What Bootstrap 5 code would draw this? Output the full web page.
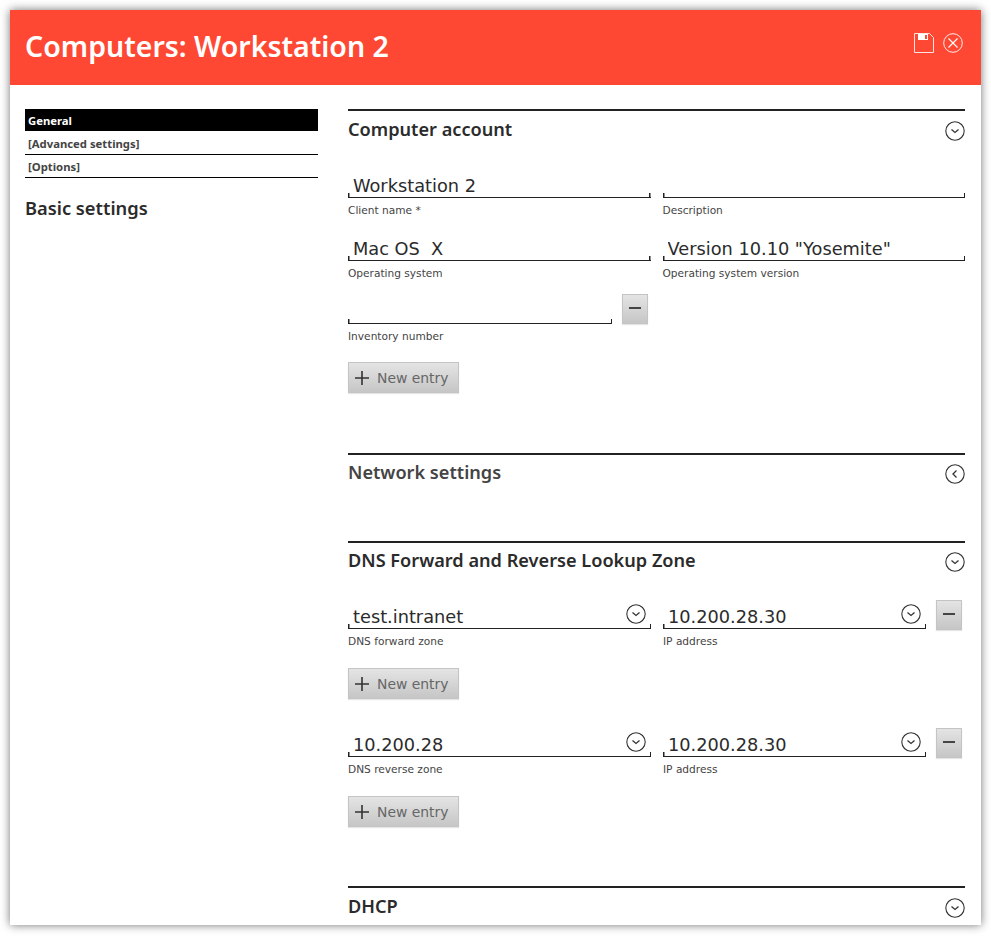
<!DOCTYPE html>
<html lang="en">
<head>
    <meta charset="UTF-8">
    <meta name="viewport" content="width=device-width, initial-scale=1.0">
    <title>Computers: Workstation 2</title>
    <link rel="stylesheet" href="https://cdn.jsdelivr.net/npm/bootstrap@5.3.0/dist/css/bootstrap.min.css">
    <style>
        html, body { height: 100%; overflow: hidden; }
        body { background: #fff; padding: 10px; font-family: "DejaVu Sans", sans-serif; color: #2b2b2b; }
        .dialog-box { width: 971px; height: 915px; overflow: hidden; background: #fff; box-shadow: 0 0 9px rgba(0,0,0,.55); }
        .dialog-head { height: 75px; flex: none; background: #ff4833; color: #fff; padding: 0 18px 0 15px; }
        .dialog-head h1 { font: 600 28.5px/1 "Noto Sans", sans-serif; margin: 0 0 3px; }
        .head-icons { margin-top: -10px; gap: 9px; }
        .side-col { width: 293px; margin-left: 15px; margin-right: 30px; padding-top: 24px; flex: none; }
        .main-col { width: 617px; padding-top: 24px; flex: none; }
        .tab-item { display: block; height: 23px; padding: 0 3px; font: 700 11.3px/23px "Noto Sans", sans-serif; color: #444; text-decoration: none; border-bottom: 1px solid #000; }
        .tab-item.on { height: 22px; line-height: 24px; margin-bottom: 1px; background: #000; color: #fff; border: 0; }
        .side-title { font: 600 18.3px/1 "Noto Sans", sans-serif; margin: 21px 0 0; color: #2b2b2b; }
        .sect { border-top: 2px solid #222; }
        .sect-head { height: 37px; }
        .sect-head.low { padding-top: 2px; }
        .sect-head h2 { font: 600 18.15px/1 "Noto Sans", sans-serif; margin: 0 0 3px; color: #2b2b2b; }
        .sect-head.dim h2 { color: #444; }
        .sect-body { padding-top: 25px; }
        .sect-body.tight { padding-top: 24px; }
        .fld-row { height: 63px; gap: 12px; }
        .fld-row.next-block { margin-top: 33px; }
        .fld-wrap { flex: 1 1 0; min-width: 0; }
        .fld-box { position: relative; }
        .fld-input.form-control { height: 25px; padding: 1px 5px 0; border: 0; border-radius: 0; box-shadow: none; font: 400 17.75px/24px "DejaVu Sans", sans-serif; color: #2b2b2b;
            background: linear-gradient(#222,#222) left bottom/100% 1.5px no-repeat, linear-gradient(#222,#222) left bottom/1.5px 5px no-repeat, linear-gradient(#222,#222) right bottom/1.5px 5px no-repeat, #fff; }
        .fld-note { display: block; font-size: 10.6px; line-height: 14px; margin-top: 5px; color: #444; }
        .fld-drop { position: absolute; right: 5px; top: 0; }
        .btn-grey.btn { display: flex; align-items: center; justify-content: center; padding: 0; border-radius: 0; border: 1px solid #c4c4c4; background: linear-gradient(#e4e4e4,#c6c6c6); box-shadow: 0 1px 1px rgba(0,0,0,.1); color: #555; }
        .btn-minus.btn { width: 26px; height: 30px; flex: none; margin-left: -2px; }
        .btn-new.btn { width: 111px; height: 31px; gap: 8px; justify-content: flex-start; padding: 0 0 0 6px; font: 400 13.9px/1 "DejaVu Sans", sans-serif; color: #666; }
        .btn-new.btn span { padding-top: 2px; }
        .btn-line.low { margin-top: 1px; }
    </style>
</head>
<body>
    <svg width="0" height="0" class="d-block">
        <symbol id="ic-down" viewBox="0 0 20 20"><circle cx="10" cy="10" r="9.2" fill="none" stroke="#333" stroke-width="1.1"/><path d="M6.500 8.500l3.500 3 3.500-3" fill="none" stroke="#333" stroke-width="1.3"/></symbol>
        <symbol id="ic-left" viewBox="0 0 20 20"><circle cx="10" cy="10" r="9.2" fill="none" stroke="#333" stroke-width="1.1"/><path d="M11.500 6.500l-3.500 3.500 3.500 3.500" fill="none" stroke="#333" stroke-width="1.3"/></symbol>
        <symbol id="ic-minus" viewBox="0 0 14 14"><path d="M1 6h12" stroke="#444" stroke-width="2"/></symbol>
        <symbol id="ic-plus" viewBox="0 0 14 14"><path d="M0 7h14M7 0v14" stroke="#333" stroke-width="1.6"/></symbol>
    </svg>

    <div class="dialog-box d-flex flex-column">
        <!-- Header -->
        <div class="dialog-head d-flex align-items-center justify-content-between">
            <h1>Computers: Workstation 2</h1>
            <div class="head-icons d-flex align-items-center">
                <svg width="20" height="20" viewBox="0 0 20 20"><path d="M.5.5h15l4 4v15H.5z" fill="none" stroke="#fff" stroke-opacity=".85"/><path d="M4 1h10v6H4z" fill="#fff"/><path d="M11 2h2v4h-2z" fill="#ff4833"/></svg>
                <svg width="20" height="20" viewBox="0 0 20 20"><circle cx="10" cy="10" r="9.300" fill="none" stroke="#fff" stroke-opacity=".9"/><path d="M5.500 5.500l9 9M14.500 5.500l-9 9" stroke="#fff" stroke-width="1.100"/></svg>
            </div>
        </div>

        <div class="d-flex">
            <!-- Sidebar -->
            <div class="side-col">
                <a class="tab-item on" href="#">General</a>
                <a class="tab-item" href="#">[Advanced settings]</a>
                <a class="tab-item" href="#">[Options]</a>
                <h3 class="side-title">Basic settings</h3>
            </div>

            <!-- Sections -->
            <div class="main-col" id="main-col"></div>
        </div>
    </div>

    <script>
        function icon(name, size) {
            return `<svg class="d-block" width="${size}" height="${size}"><use href="#ic-${name}"/></svg>`;
        }
        function field(label, value, drop, width) {
            let style = width ? ` style="flex:none;width:${width}px"` : "";
            return `<div class="fld-wrap"${style}><div class="fld-box">
                <input type="text" class="form-control fld-input" value='${value}'>
                ${drop ? `<span class="fld-drop">${icon("down", 20)}</span>` : ""}
            </div><span class="fld-note">${label}</span></div>`;
        }
        const minus = mt => `<button class="btn btn-grey btn-minus" style="margin-top:${mt}px">${icon("minus", 14)}</button>`;
        const newEntry = `<button class="btn btn-grey btn-new">${icon("plus", 14)}<span>New entry</span></button>`;

        const sections = [
            { title: "Computer account", pad: 60, low: true, body: `
                <div class="d-flex fld-row">${field("Client name *", "Workstation 2")}${field("Description", "")}</div>
                <div class="d-flex fld-row">${field("Operating system", "Mac OS  X")}${field("Operating system version", 'Version 10.10 "Yosemite"')}</div>
                <div class="d-flex fld-row">${field("Inventory number", "", false, 264)}${minus(-5)}</div>
                <div class="btn-line">${newEntry}</div>` },
            { title: "Network settings", dim: true, left: true, pad: 49 },
            { title: "DNS Forward and Reverse Lookup Zone", pad: 59, tight: true, body: `
                <div class="d-flex fld-row">${field("DNS forward zone", "test.intranet", true, 303)}${field("IP address", "10.200.28.30", true, 263)}${minus(-4)}</div>
                <div class="btn-line low">${newEntry}</div>
                <div class="d-flex fld-row next-block">${field("DNS reverse zone", "10.200.28", true, 303)}${field("IP address", "10.200.28.30", true, 263)}${minus(-4)}</div>
                <div class="btn-line low">${newEntry}</div>` },
            { title: "DHCP", pad: 0, low: true }
        ];

        document.getElementById("main-col").innerHTML = sections.map(s => `
            <div class="sect" style="padding-bottom:${s.pad}px">
                <div class="sect-head d-flex align-items-center justify-content-between${s.dim ? " dim" : ""}${s.low ? " low" : ""}">
                    <h2>${s.title}</h2>${icon(s.left ? "left" : "down", 20)}
                </div>
                ${s.body ? `<div class="sect-body${s.tight ? " tight" : ""}">${s.body}</div>` : ""}
            </div>`).join("");
    </script>
</body>
</html>
